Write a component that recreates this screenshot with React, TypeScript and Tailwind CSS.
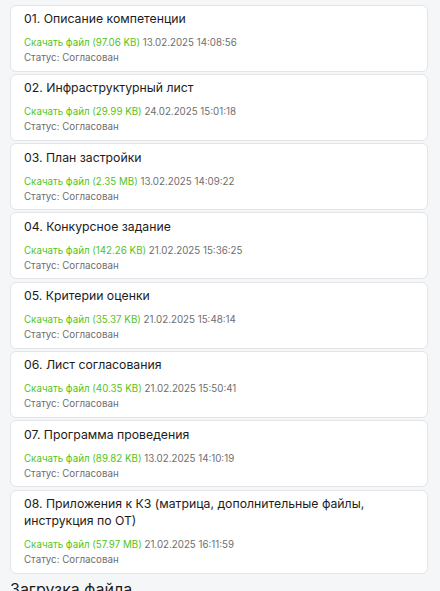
import React from "react";

const items = [
  { t: "01. Описание компетенции", s: "97.06 KB", d: "13.02.2025 14:08:56" },
  { t: "02. Инфраструктурный лист", s: "29.99 KB", d: "24.02.2025 15:01:18" },
  { t: "03. План застройки", s: "2.35 MB", d: "13.02.2025 14:09:22" },
  { t: "04. Конкурсное задание", s: "142.26 KB", d: "21.02.2025 15:36:25" },
  { t: "05. Критерии оценки", s: "35.37 KB", d: "21.02.2025 15:48:14" },
  { t: "06. Лист согласования", s: "40.35 KB", d: "21.02.2025 15:50:41" },
  { t: "07. Программа проведения", s: "89.82 KB", d: "13.02.2025 14:10:19" },
  {
    t: "08. Приложения к КЗ (матрица, дополнительные файлы, инструкция по ОТ)",
    s: "57.97 MB",
    d: "21.02.2025 16:11:59",
  },
];

export default function App() {
  return (
    <div
      className="h-[591px] overflow-hidden bg-[#f5f6f8] pl-[10px] pr-[12px] pt-[4.5px]"
      style={{ fontFamily: "Inter, 'Noto Sans', sans-serif" }}
    >
      <div className="flex flex-col gap-[2.3px]">
        {items.map((it) => (
          <div
            key={it.t}
            className="rounded-[6px] border border-[#e2e4e8] bg-white px-[13px] pt-[4.5px] pb-[5.5px]"
          >
            <div className="text-[12.25px] leading-[17px] text-[#1c1c1c] pr-[20px]">{it.t}</div>
            <div className="mt-[8px] text-[9.75px] leading-[15px] text-[#6e6e6e]">
              <span className="text-[#52c41a]">Скачать файл ({it.s})</span> {it.d}
            </div>
            <div className="text-[9.75px] leading-[15px] text-[#6e6e6e]">Статус: Согласован</div>
          </div>
        ))}
      </div>
      <div className="mt-[5.5px] text-[16px] leading-[20px] text-[#1c1c1c]">Загрузка файла</div>
    </div>
  );
}
